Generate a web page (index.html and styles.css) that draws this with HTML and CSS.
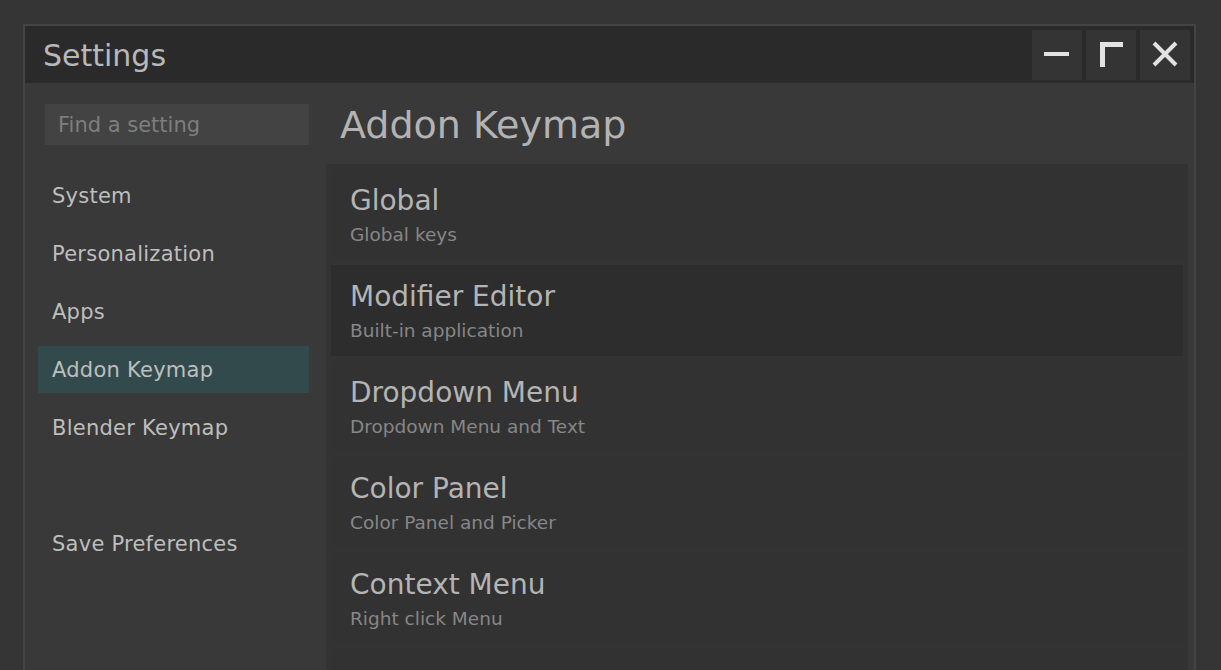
FILE: index.html
```html
<!DOCTYPE html>
<html>
<head>
<meta charset="utf-8">
<link rel="stylesheet" href="styles.css">
</head>
<body>
<div class="window">
  <div class="titlebar">
    <div class="title">Settings</div>
    <div class="controls">
      <div class="ctl"><svg width="50" height="50" viewBox="0 0 50 50"><rect x="12" y="22" width="25" height="4" fill="#e2e2e2"/></svg></div>
      <div class="ctl"><svg width="50" height="50" viewBox="0 0 50 50"><path d="M14 37 V12 H37 V17 H19 V37 Z" fill="#e2e2e2"/></svg></div>
      <div class="ctl"><svg width="50" height="50" viewBox="0 0 50 50"><path d="M14 13 L36 35 M36 13 L14 35" stroke="#e2e2e2" stroke-width="4"/></svg></div>
    </div>
  </div>
  <div class="body">
    <div class="sidebar">
      <div class="search">Find a setting</div>
      <div class="nav">
        <div class="nav-item">System</div>
        <div class="nav-item">Personalization</div>
        <div class="nav-item">Apps</div>
        <div class="nav-item active">Addon Keymap</div>
        <div class="nav-item">Blender Keymap</div>
        <div class="nav-spacer"></div>
        <div class="nav-item">Save Preferences</div>
      </div>
    </div>
    <div class="content">
      <div class="header">Addon Keymap</div>
      <div class="panel">
        <div class="card">
          <div class="card-title">Global</div>
          <div class="card-sub">Global keys</div>
        </div>
        <div class="card hover">
          <div class="card-title">Modifier Editor</div>
          <div class="card-sub">Built-in application</div>
        </div>
        <div class="card">
          <div class="card-title">Dropdown Menu</div>
          <div class="card-sub">Dropdown Menu and Text</div>
        </div>
        <div class="card">
          <div class="card-title">Color Panel</div>
          <div class="card-sub">Color Panel and Picker</div>
        </div>
        <div class="card">
          <div class="card-title">Context Menu</div>
          <div class="card-sub">Right click Menu</div>
        </div>
        <div class="card">
          <div class="card-title">&nbsp;</div>
          <div class="card-sub">&nbsp;</div>
        </div>
      </div>
    </div>
  </div>
</div>
</body>
</html>
```

FILE: styles.css
```css
html, body {
  margin: 0;
  padding: 0;
  height: 670px;
  overflow: hidden;
  background: #353535;
  font-family: "DejaVu Sans", sans-serif;
}

.window {
  margin: 24px 0 0 23px;
  width: 1173px;
  height: 720px;
  box-sizing: border-box;
  border: 2px solid #444444;
  background: #393939;
  display: flex;
  flex-direction: column;
}

.titlebar {
  height: 57px;
  background: #2a2a2a;
  display: flex;
  align-items: flex-start;
  justify-content: space-between;
  padding: 4px 4px 0 18px;
  box-sizing: border-box;
}

.title {
  color: #b8b8b8;
  font-size: 30px;
  line-height: 52px;
}

.controls {
  display: flex;
  gap: 4px;
}

.ctl {
  width: 50px;
  height: 50px;
  background: #343434;
}

.ctl svg {
  display: block;
}

.body {
  flex: 1;
  display: flex;
  gap: 17px;
  padding: 0 6px 0 13px;
  min-height: 0;
}

.sidebar {
  width: 271px;
  flex: none;
  display: flex;
  flex-direction: column;
  padding-top: 21px;
}

.search {
  margin-left: 7px;
  height: 41px;
  background: #434343;
  color: #7e7e7e;
  font-size: 21px;
  line-height: 43px;
  padding-left: 13px;
}

.nav {
  margin-top: 27px;
  display: flex;
  flex-direction: column;
  gap: 11px;
}

.nav-item {
  height: 47px;
  line-height: 49px;
  padding-left: 14px;
  font-size: 21px;
  letter-spacing: 0.25px;
  color: #bebebe;
}

.nav-spacer {
  height: 47px;
}

.nav-item.active {
  background: #334a4c;
}

.content {
  flex: 1;
  display: flex;
  flex-direction: column;
  min-width: 0;
}

.header {
  height: 83px;
  flex: none;
  display: flex;
  align-items: center;
  padding-left: 14px;
  margin-bottom: -2px;
  font-size: 38px;
  color: #b3b3b3;
}

.panel {
  flex: 1;
  background: #333333;
  padding: 5px 5px 0 5px;
  display: flex;
  flex-direction: column;
  gap: 5px;
}

.card {
  height: 91px;
  flex: none;
  box-sizing: border-box;
  background: #323232;
  padding: 15px 19px 0 19px;
}

.card.hover {
  background: #2d2d2d;
}

.card-title {
  font-size: 28px;
  line-height: 34px;
  color: #b4b4b4;
}

.card-sub {
  margin-top: 5px;
  font-size: 18.5px;
  line-height: 23px;
  color: #878787;
}
```
